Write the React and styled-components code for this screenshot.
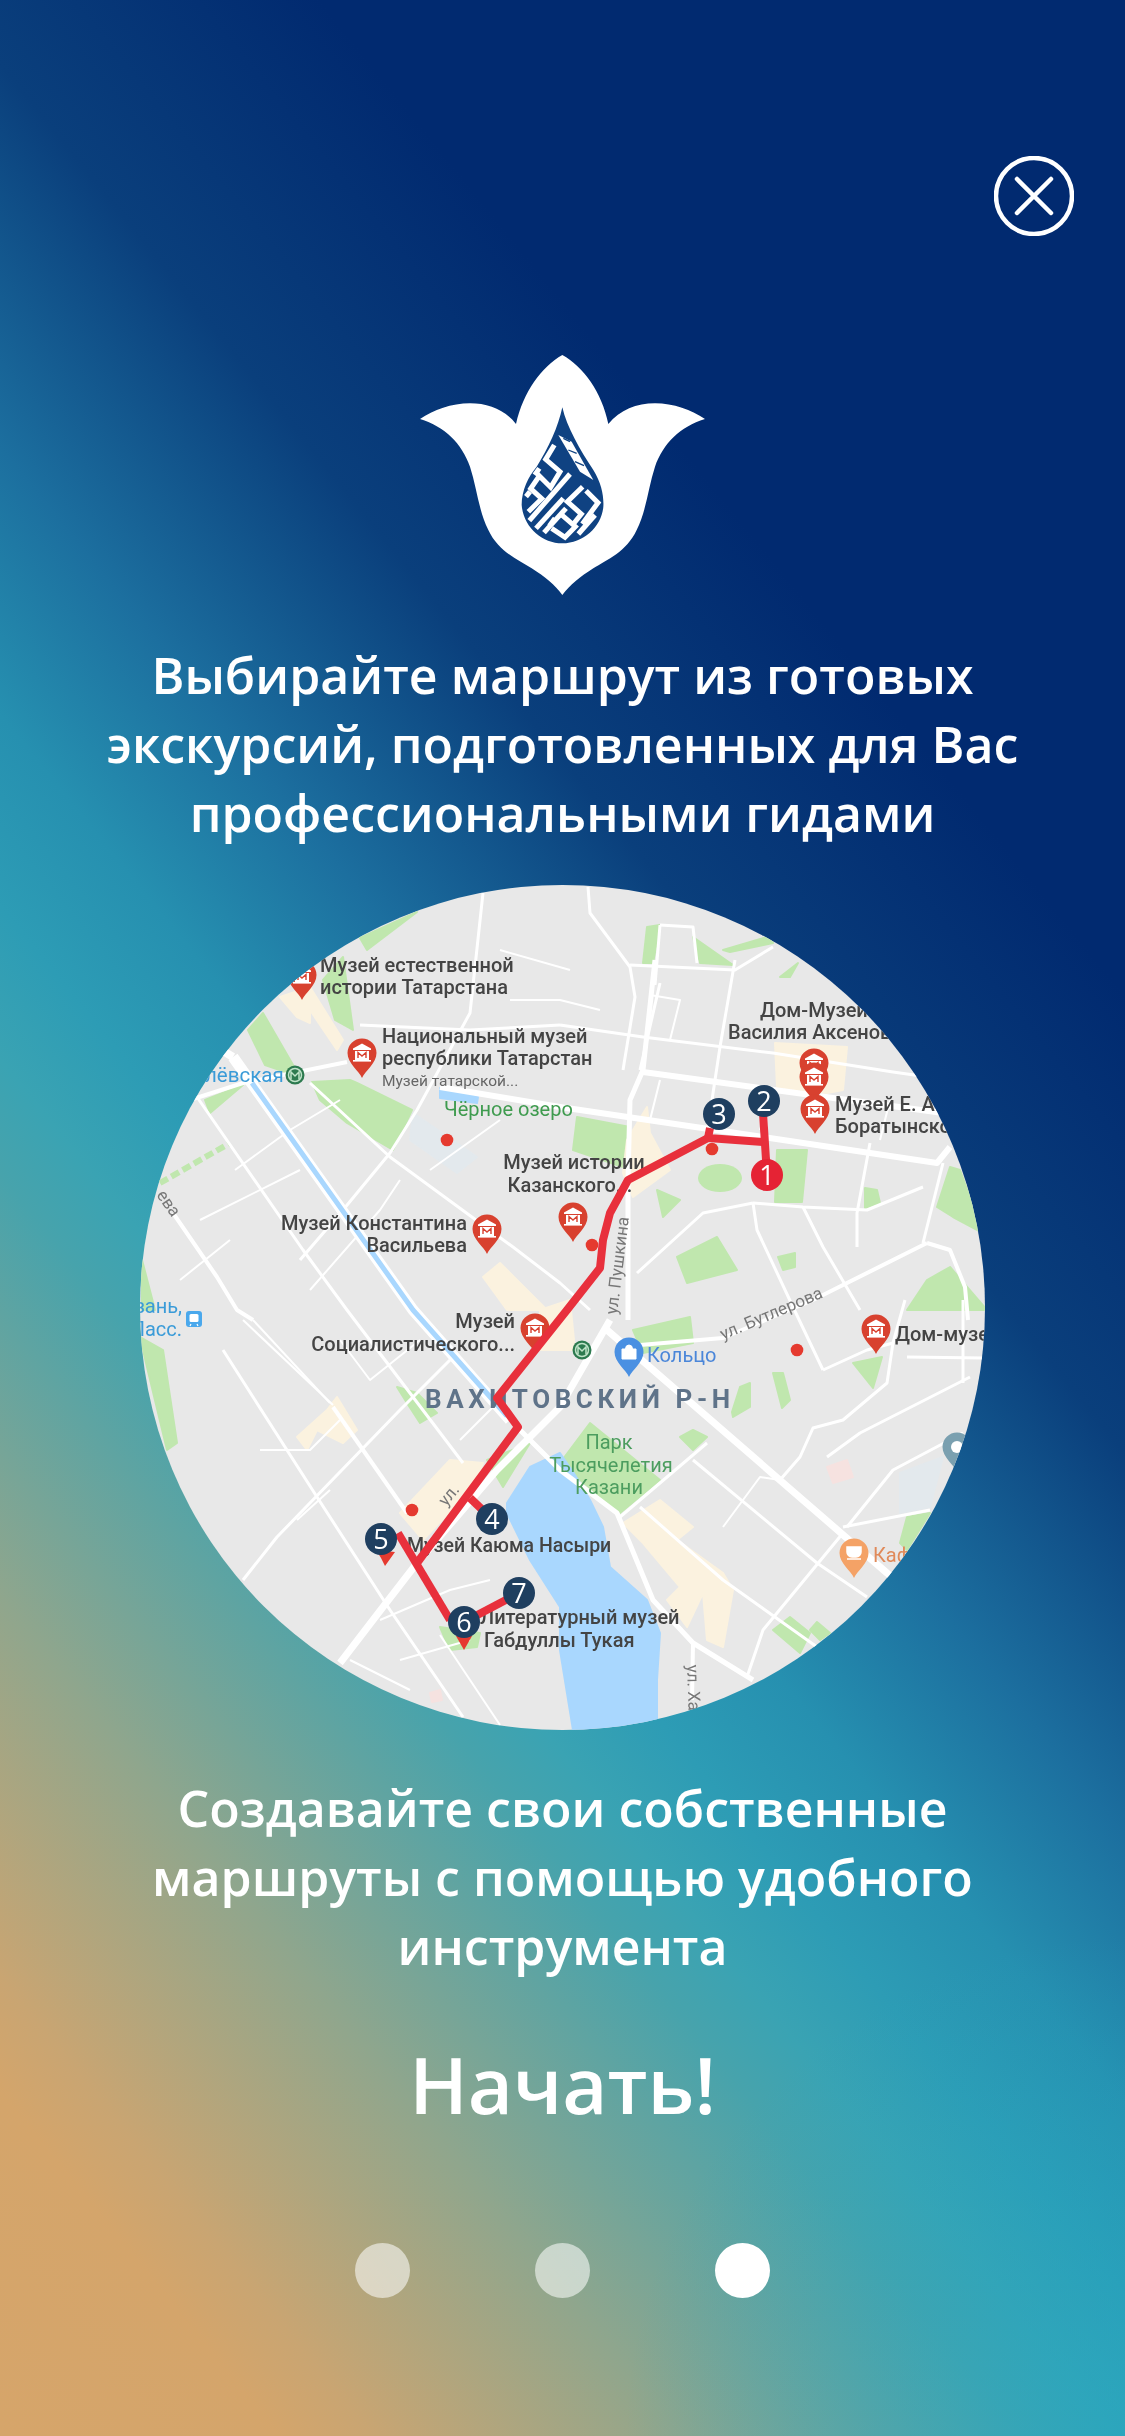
import React from "react";
import styled, { createGlobalStyle } from "styled-components";

const GlobalStyle = createGlobalStyle`
  html, body {
    margin: 0;
    padding: 0;
  }
  body {
    font-family: "Open Sans", "Liberation Sans", sans-serif;
  }
`;

const Screen = styled.div`
  width: 1125px;
  height: 2436px;
  overflow: hidden;
  box-sizing: border-box;
  padding-top: 156px;
  display: flex;
  flex-direction: column;
  align-items: center;
  background:
    radial-gradient(circle at 100% 100%, rgba(35, 168, 195, 0.6), rgba(35, 168, 195, 0) 500px),
    linear-gradient(
      51deg,
      #d6a56a 0%,
      #d4a56b 9%,
      #c9a572 12%,
      #8fa68d 22%,
      #47a3ac 33%,
      #3aa3b3 36%,
      #2d9cb5 40%,
      #2690b0 45%,
      #1c6f9f 52%,
      #0a3f7c 62%,
      #012a70 74%,
      #012a70 100%
    );
`;

const CloseButton = styled.button`
  align-self: flex-end;
  width: 80px;
  height: 80px;
  margin-right: 51px;
  padding: 0;
  border: 0;
  background: none;
  svg {
    display: block;
  }
`;

const Logo = styled.svg`
  display: block;
  width: 285px;
  height: 240px;
  margin-top: 119px;
`;

const Caption = styled.p`
  margin: 0;
  width: 1000px;
  font-size: 50px;
  line-height: 69px;
  font-weight: 600;
  text-align: center;
  color: #fff;
  white-space: pre-line;
`;

const TopCaption = styled(Caption)`
  margin-top: 46px;
`;

const BottomCaption = styled(Caption)`
  margin-top: 44px;
`;

const MapCircle = styled.svg`
  display: block;
  flex: none;
  width: 845px;
  height: 845px;
  margin-top: 37px;
  border-radius: 50%;
  background: #e8e8e8;
`;

const Start = styled.div`
  margin-top: 50px;
  font-size: 78px;
  line-height: 106px;
  font-weight: 600;
  color: #fff;
`;

const Dots = styled.div`
  display: flex;
  gap: 125px;
  margin-top: 106px;
`;

const Dot = styled.span`
  width: 55px;
  height: 55px;
  border-radius: 50%;
  background: ${(p) => (p.$active ? "#fff" : "rgba(255, 255, 255, 0.55)")};
`;

const Road = styled.polyline`
  fill: none;
  stroke: ${(p) => p.$color || "#fff"};
  stroke-width: ${(p) => p.$w || 3};
  stroke-linejoin: round;
`;

const Area = styled.polygon`
  fill: ${(p) => p.$color};
  stroke: ${(p) => p.$color};
  stroke-width: 2;
  stroke-linejoin: round;
`;

const Label = styled.text`
  font-family: Roboto, "Liberation Sans", sans-serif;
  font-size: ${(p) => p.$size || 20}px;
  font-weight: ${(p) => p.$weight || 500};
  fill: ${(p) => p.$color || "#444"};
  letter-spacing: ${(p) => p.$spacing || 0}px;
  text-anchor: ${(p) => p.$anchor || "start"};
`;

const StopNumber = styled.text`
  font-family: "Open Sans", sans-serif;
  font-size: 27px;
  font-weight: 500;
  fill: #fff;
  text-anchor: middle;
`;

const GREEN = "#c0e7ae";
const SAND = "#fbf2df";
const WATER = "#a9d7fe";
const HAZE = "#e3e9ed";

const areas = [
  [HAZE, "413,1113 477,1157 457,1173 410,1140"],
  [HAZE, "900,1473 943,1457 930,1507 900,1513"],
  ["#f6e2e0", "827,1467 847,1460 853,1477 833,1483"],
  ["#f6e2e0", "430,1693 440,1690 442,1700 432,1702"],
  [GREEN, "312,1082 350,1080 357,1083 412,1110 393,1150 347,1123 320,1100"],
  [GREEN, "248,1030 263,1013 300,1077 265,1065"],
  [GREEN, "360,938 417,912 367,950"],
  [GREEN, "323,980 343,957 353,1030 335,1020"],
  [GREEN, "142,1260 155,1310 142,1310"],
  [GREEN, "140,1337 163,1350 177,1443 167,1450 147,1367"],
  [GREEN, "205,1100 243,1085 210,1113"],
  [GREEN, "577,1117 630,1127 623,1167 573,1150"],
  [GREEN, "777,1150 807,1150 802,1202 775,1202"],
  [GREEN, "657,1190 680,1200 663,1217"],
  [GREEN, "677,1257 717,1237 737,1270 687,1283"],
  [GREEN, "778,1257 795,1253 795,1267 783,1270"],
  [GREEN, "865,1188 877,1190 880,1203 865,1208"],
  [GREEN, "950,1167 960,1170 983,1233 953,1217 937,1207"],
  [GREEN, "950,1267 987,1310 907,1310 927,1280"],
  [GREEN, "853,1363 882,1357 873,1388"],
  [GREEN, "693,937 733,965 700,963"],
  [GREEN, "723,950 767,937 773,943 730,952"],
  [GREEN, "780,977 798,963 790,977"],
  [GREEN, "647,927 660,925 653,963 643,963"],
  [GREEN, "633,1330 690,1317 693,1343 643,1353"],
  [GREEN, "773,1373 783,1373 790,1400 782,1408"],
  [GREEN, "740,1387 750,1383 750,1407 733,1417 732,1412"],
  [GREEN, "590,1423 660,1480 620,1513 560,1463"],
  [GREEN, "530,1443 503,1487 487,1460"],
  [GREEN, "680,1437 693,1430 707,1437 693,1450"],
  [GREEN, "773,1630 790,1617 810,1633 800,1653"],
  [GREEN, "810,1630 817,1622 830,1633 820,1640"],
  [GREEN, "907,1517 930,1513 907,1550 900,1543"],
  [GREEN, "397,1387 417,1393 437,1413 420,1423 407,1403"],
  [GREEN, "440,1627 480,1633 477,1647 450,1650"],
  [SAND, "280,997 310,987 343,1040 337,1050 310,1010 310,1023 297,1017"],
  [SAND, "483,1277 500,1263 547,1310 507,1310"],
  [SAND, "775,1043 847,1047 843,1090 827,1093 777,1087"],
  [SAND, "627,1140 647,1107 650,1133 670,1170 633,1197 623,1173"],
  [SAND, "297,1437 327,1410 337,1397 357,1430 343,1443 317,1430 307,1450"],
  [SAND, "400,1513 450,1460 483,1463 473,1487 423,1540"],
  [SAND, "540,1310 570,1300 575,1350 540,1350"],
  [SAND, "623,1523 660,1500 693,1527 677,1540 723,1573 733,1590 723,1647 707,1640 703,1593 687,1627 667,1600 680,1587 643,1543"],
  [WATER, "440,1088 478,1097 477,1103 440,1098"],
  [WATER, "507,1503 530,1467 560,1453 575,1475 590,1500 603,1527 610,1567 647,1600 660,1633 657,1680 657,1730 573,1730 560,1650 560,1607 530,1560 507,1513"],
];

const roads = [
  // broad avenues
  ["233,1057 413,1310 510,1420", 11],
  ["607,1330 887,1573 960,1632", 7],
  ["340,1663 383,1607 417,1563 497,1470 560,1407 610,1320", 7],
  ["520,1430 560,1470 617,1513 653,1600 693,1643 753,1680", 5],
  ["628,1320 628,1180 630,1100 643,1070 655,960", 5],
  ["643,1072 943,1113 990,1120", 6],
  ["440,1087 560,1107 763,1137 937,1163 950,1147", 6],
  ["190,1100 243,1083 347,1062", 4],
  ["640,1345 723,1338 813,1300 927,1243", 4],
  ["927,1243 950,1250 965,1287 968,1320", 4],
  ["173,1213 217,1277 237,1310 253,1320", 4],
  ["333,1407 407,1513", 4],
  ["693,1643 692,1700", 4],
  ["210,1043 233,1057", 8],
  ["963,1300 963,1383", 3],
  ["907,1357 983,1358", 3],
  // ordinary streets
  ["560,1025 643,1037 773,1053 893,1072 985,1085", 3],
  ["360,1025 470,1030 560,1025", 3],
  ["310,1083 390,1157 513,1247 560,1283 590,1310", 3],
  ["197,1097 303,1250 347,1310 463,1463", 3],
  ["483,893 470,1013 417,1110 390,1153 343,1210 300,1260", 3],
  ["223,1350 253,1397 317,1497 390,1610 463,1717", 3],
  ["243,1580 277,1537 400,1410 450,1360", 3],
  ["253,1320 330,1403", 2],
  ["243,1320 333,1405", 2],
  ["753,1203 803,1207 867,1210 923,1187", 3],
  ["637,1273 703,1213 753,1203", 3],
  ["753,1203 757,1230 793,1307 823,1370", 3],
  ["803,1207 823,1247 860,1310", 3],
  ["870,1143 857,1213 857,1247", 3],
  ["943,1163 923,1243", 3],
  ["735,960 720,1047 707,1133", 3],
  ["660,983 640,1070", 3],
  ["588,887 590,913 630,967 635,997 623,1070", 3],
  ["630,965 735,970 773,947", 3],
  ["660,925 693,927 697,963", 3],
  ["660,925 655,985", 3],
  ["893,1343 887,1383 843,1420 813,1428 800,1457 780,1480", 3],
  ["970,1377 860,1433 827,1457", 3],
  ["823,1370 867,1350 893,1343 905,1300", 3],
  ["843,1527 930,1510", 3],
  ["847,1527 893,1470 963,1433", 3],
  ["620,1517 707,1443", 3],
  ["640,1507 723,1580 817,1647", 3],
  ["693,1460 817,1563 867,1597", 3],
  ["747,1677 763,1630 843,1533", 3],
  ["723,1527 760,1477 780,1480", 2],
  ["440,1635 500,1725", 2],
  ["380,1620 450,1590 490,1580", 2],
  ["400,1660 470,1640", 2],
  ["297,1520 330,1490", 2],
  ["260,1450 310,1450 340,1420", 2],
  ["235,1170 290,1130 340,1100", 2],
  ["200,1220 300,1170", 2],
  ["310,1290 380,1210 400,1180", 2],
  ["180,1280 230,1240", 2],
  ["430,1170 500,1120", 2],
  ["510,1000 560,1000 600,1010", 2],
  ["500,950 570,970", 2],
  ["670,1040 680,1000 650,995", 2],
  ["770,1095 760,1130", 2],
  ["890,1100 880,1140", 2],
  ["650,1120 660,1080", 2],
  ["350,1660 410,1690", 2],
  ["460,1440 500,1400", 2],
  ["340,1340 370,1380 420,1340", 2],
];

const labels = [
  { x: 320, y: 972, t: "Музей естественной" },
  { x: 320, y: 994, t: "истории Татарстана" },
  { x: 382, y: 1043, t: "Национальный музей" },
  { x: 382, y: 1065, t: "республики Татарстан" },
  { x: 382, y: 1086, t: "Музей татарской...", size: 15.5, weight: 400, color: "#666" },
  { x: 444, y: 1116, t: "Чёрное озеро", color: "#3f9b4f", weight: 400 },
  { x: 205, y: 1082, t: "лёвская", color: "#3a9bd8", size: 20.5, weight: 400 },
  { x: 574, y: 1169, t: "Музей истории", anchor: "middle" },
  { x: 570, y: 1192, t: "Казанского...", anchor: "middle" },
  { x: 467, y: 1230, t: "Музей Константина", anchor: "end" },
  { x: 467, y: 1252, t: "Васильева", anchor: "end" },
  { x: 760, y: 1017, t: "Дом-Музей" },
  { x: 728, y: 1039, t: "Василия Аксенова" },
  { x: 835, y: 1111, t: "Музей Е. А." },
  { x: 835, y: 1133, t: "Боратынского" },
  { x: 515, y: 1328, t: "Музей", anchor: "end" },
  { x: 515, y: 1351, t: "Социалистического...", anchor: "end" },
  { x: 647, y: 1362, t: "Кольцо", color: "#4a86d9", weight: 400 },
  { x: 895, y: 1341, t: "Дом-музей" },
  { x: 182, y: 1313, t: "Казань,", color: "#3a9bd8", anchor: "end", weight: 400 },
  { x: 182, y: 1336, t: "Пасс.", color: "#3a9bd8", anchor: "end", weight: 400 },
  { x: 609, y: 1449, t: "Парк", color: "#4c9d5f", anchor: "middle", weight: 400 },
  { x: 611, y: 1472, t: "Тысячелетия", color: "#4c9d5f", anchor: "middle", weight: 400 },
  { x: 609, y: 1494, t: "Казани", color: "#4c9d5f", anchor: "middle", weight: 400 },
  { x: 407, y: 1552, t: "Музей Каюма Насыри", size: 19.5 },
  { x: 480, y: 1624, t: "Литературный музей" },
  { x: 484, y: 1647, t: "Габдуллы Тукая" },
  { x: 873, y: 1562, t: "Кафе", color: "#e08a5a", weight: 400 },
];

const turnedLabels = [
  { x: 723, y: 1340, angle: -23, t: "ул. Бутлерова" },
  { x: 617, y: 1315, angle: -83, t: "ул. Пушкина" },
  { x: 687, y: 1665, angle: 88, t: "ул. Хая" },
  { x: 156, y: 1195, angle: 55, t: "ева" },
  { x: 446, y: 1507, angle: -50, t: "ул." },
];

const pins = [
  { x: 302, y: 975 },
  { x: 362, y: 1053 },
  { x: 487, y: 1229 },
  { x: 814, y: 1063 },
  { x: 814, y: 1077 },
  { x: 815, y: 1109 },
  { x: 573, y: 1217 },
  { x: 535, y: 1328 },
  { x: 876, y: 1329 },
];

const dots = [
  [447, 1140],
  [712, 1149],
  [592, 1245],
  [412, 1510],
  [797, 1350],
];

const stops = [
  { n: 2, x: 764, y: 1101 },
  { n: 3, x: 719, y: 1114 },
  { n: 4, x: 492, y: 1519 },
  { n: 5, x: 381, y: 1539 },
  { n: 6, x: 464, y: 1622 },
  { n: 7, x: 519, y: 1593 },
  { n: 1, x: 767, y: 1175, color: "#e52334" },
];

const route = [
  "767,1175 763,1113",
  "763,1142 708,1138 710,1128",
  "708,1138 628,1180 610,1213 603,1240 600,1268 567,1310 497,1398 518,1427 417,1563",
  "470,1498 492,1519",
  "398,1533 450,1620",
  "464,1622 519,1593",
];

const pinShape = "M0 25C-3 18-14.5 10-14.5 0A14.5 14.5 0 1 1 14.5 0C14.5 10 3 18 0 25Z";

function Pin({ x, y, color = "#d8412f" }) {
  return (
    <g transform={`translate(${x} ${y})`}>
      <path d={pinShape} fill={color} />
      <path d="M0-9.5L9-4.5V-3H-9V-4.5Z" fill="#fff" />
      <rect x="-7" y="-2" width="14" height="9" fill="#fff" />
      <rect x="-9" y="7" width="18" height="1.6" fill="#fff" />
      <path d="M-4 5V-.5L0 3L4-.5V5" fill="none" stroke={color} strokeWidth="1.4" />
    </g>
  );
}

function MetroMark({ x, y }) {
  return (
    <g transform={`translate(${x} ${y})`}>
      <circle r="9.5" fill="#2d7a4f" />
      <circle r="6.5" fill="none" stroke="#bfe3c8" strokeWidth="1.5" />
      <path d="M-4 4V-3L0 1L4-3V4" fill="none" stroke="#bfe3c8" strokeWidth="1.5" />
    </g>
  );
}

function MapView() {
  return (
    <MapCircle viewBox="140 885 845 845">
      <g style={{ filter: "blur(0.5px)" }}>
        {areas.map(([color, points]) => (
          <Area key={points} $color={color} points={points} />
        ))}
        <ellipse cx="720" cy="1178" rx="22" ry="14" fill={GREEN} />
        <Road $color={GREEN} $w={6} strokeDasharray="9 4" points="160,1183 230,1143" />
        {roads.map(([points, w]) => (
          <Road key={points} $w={w} points={points} />
        ))}
        <Road $color={WATER} $w={5} points="252,1083 413,1310 507,1416" />

        <Label x="425" y="1408" $size={26} $weight={700} $spacing={4.6} $color="#5f7389">
          ВАХИТОВСКИЙ Р-Н
        </Label>
        {labels.map((l) => (
          <Label
            key={l.t}
            x={l.x}
            y={l.y}
            $size={l.size}
            $weight={l.weight}
            $color={l.color}
            $anchor={l.anchor}
          >
            {l.t}
          </Label>
        ))}
        {turnedLabels.map((l) => (
          <Label
            key={l.t}
            x={l.x}
            y={l.y}
            $size={17}
            $weight={400}
            $color="#777"
            transform={`rotate(${l.angle} ${l.x} ${l.y})`}
          >
            {l.t}
          </Label>
        ))}

        {pins.map((p) => (
          <Pin key={`${p.x}-${p.y}`} x={p.x} y={p.y} />
        ))}
        <g transform="translate(629 1352)">
          <path d={pinShape} fill="#4a90e2" />
          <path d="M-7-3H7V7H-7ZM-3.5-3A3.5 4 0 0 1 3.5-3" fill="#fff" stroke="#fff" strokeWidth="1" />
        </g>
        <g transform="translate(854 1553)">
          <path d={pinShape} fill="#f4a266" />
          <path d="M-7-6H7V-1A5 5 0 0 1 2 4H-2A5 5 0 0 1-7-1ZM-7 6H7" fill="#fff" stroke="#fff" strokeWidth="1.5" />
        </g>
        <g transform="translate(957 1447)">
          <path d={pinShape} fill="#7aa0b0" />
          <circle r="6" fill="#fff" />
        </g>
        <MetroMark x={295} y={1075} />
        <MetroMark x={582} y={1350} />
        <g transform="translate(194 1319)">
          <rect x="-8" y="-8" width="16" height="16" rx="3" fill="#4aa8ec" />
          <rect x="-4.5" y="-5" width="9" height="8" rx="1.5" fill="#fff" />
          <path d="M-3 5L-4 7M3 5L4 7" stroke="#fff" strokeWidth="1.2" />
        </g>

        {dots.map(([x, y]) => (
          <circle key={x} cx={x} cy={y} r="6.3" fill="#e53a2f" />
        ))}
        <path d="M376 1550L395 1552L385 1566L381 1558Z" fill="#e53a2f" />
        <path d="M456 1636H472L464 1650Z" fill="#e53a2f" />

        {route.map((points) => (
          <Road key={points} $color="#e8303c" $w={8} points={points} />
        ))}
        {stops.map((s) => (
          <g key={s.n}>
            <circle cx={s.x} cy={s.y} r="16" fill={s.color || "#1f3f60"} />
            <StopNumber x={s.x} y={s.y + 10}>
              {s.n}
            </StopNumber>
          </g>
        ))}
      </g>
    </MapCircle>
  );
}

const mazeLines = [
  "M133 135L107 178L150 215L122 262L88 228L62 266L95 296L55 335",
  "M180 222L58 362",
  "M218 260L172 305L214 342L190 372",
  "M228 272L264 308L217 372",
  "M160 295L78 385",
  "M168 325L102 398",
  "M150 340L196 380L165 412L125 385",
  "M135 355L118 378",
  "M205 402L255 345",
  "M88 205L74 225",
  "M60 275L48 290",
];

function TulipLogo() {
  return (
    <Logo viewBox="120 105 855 720">
      <path
        fill="#fff"
        d="M547 105C610 140 665 215 685 312C720 270 770 250 825 250C880 250 935 270 975 297C900 320 850 370 825 440C805 500 800 570 770 630C740 695 680 720 640 745C600 770 570 795 547 825C525 795 495 770 455 745C415 720 355 695 325 630C295 570 290 500 270 440C245 370 195 320 120 297C160 270 215 250 270 250C325 250 375 270 408 312C430 215 485 140 547 105Z"
      />
      <path
        fill="#0f4282"
        d="M547 262C560 320 600 390 640 450C665 490 672 530 670 560C665 620 610 670 547 670C485 670 430 620 425 555C425 510 445 470 470 440C505 385 535 320 547 262Z"
      />
      <g transform="translate(390 240)">
        <path fill="#fff" d="M145 105L185 125L250 240L210 215Z" />
        <path fill="none" stroke="#0f4282" strokeWidth="4" d="M160 115L180 125M175 150L200 160M195 185L222 197" />
        {mazeLines.map((d) => (
          <path key={d} d={d} fill="none" stroke="#fff" strokeWidth="15" />
        ))}
      </g>
    </Logo>
  );
}

export default function App() {
  return (
    <>
      <GlobalStyle />
      <Screen>
        <CloseButton aria-label="Закрыть">
          <svg width="80" height="80" viewBox="0 0 80 80">
            <circle cx="40" cy="40" r="38" fill="none" stroke="#fff" strokeWidth="4.5" />
            <path d="M23 23L57 57M57 23L23 57" stroke="#fff" strokeWidth="4.5" strokeLinecap="round" />
          </svg>
        </CloseButton>
        <TulipLogo />
        <TopCaption>
          {"Выбирайте маршрут из готовых\nэкскурсий, подготовленных для Вас\nпрофессиональными гидами"}
        </TopCaption>
        <MapView />
        <BottomCaption>
          {"Создавайте свои собственные\nмаршруты с помощью удобного\nинструмента"}
        </BottomCaption>
        <Start>Начать!</Start>
        <Dots>
          <Dot />
          <Dot />
          <Dot $active />
        </Dots>
      </Screen>
    </>
  );
}
